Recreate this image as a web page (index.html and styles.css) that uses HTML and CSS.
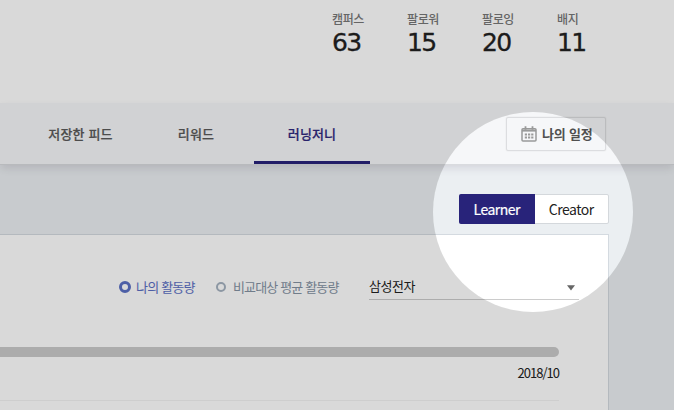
FILE: index.html
```html
<!DOCTYPE html>
<html lang="ko">
<head>
<meta charset="utf-8">
<title>러닝저니</title>
<link rel="stylesheet" href="styles.css">
</head>
<body>
<div class="page">
<header class="profile">
  <dl class="stats">
    <div><dt>캠퍼스</dt><dd>63</dd></div>
    <div><dt>팔로워</dt><dd>15</dd></div>
    <div><dt>팔로잉</dt><dd>20</dd></div>
    <div><dt>배지</dt><dd>11</dd></div>
  </dl>
</header>
<nav class="tabs">
  <a class="tab tab-feed"><span>저장한 피드</span></a>
  <a class="tab tab-reward"><span>리워드</span></a>
  <a class="tab tab-journey active"><span>러닝저니</span></a>
  <button class="schedule">
    <svg width="16" height="16" viewBox="0 0 16 16" fill="none" stroke="#999a9a">
      <rect x="1" y="2.8" width="14" height="12.2" rx="1" stroke-width="1.5"/>
      <path d="M1 4.6h14" stroke-width="2"/>
      <path d="M4.5 .3v3.5M11.5 .3v3.5" stroke-width="1.8"/>
      <path d="M3.8 8.5h8.6M3.8 11.5h8.6" stroke-width="2" stroke-dasharray="2.2 1"/>
    </svg>
    <span>나의 일정</span>
  </button>
</nav>
<main class="content">
  <div class="toggle"><button class="on"><span>Learner</span></button><button><span>Creator</span></button></div>
  <section class="card">
    <div class="filters">
      <span class="radio mine"><i></i><span>나의 활동량</span></span>
      <span class="radio compare"><i></i><span>비교대상 평균 활동량</span></span>
      <div class="select"><span>삼성전자</span><svg width="8" height="6" viewBox="0 0 8 6"><path d="M0 .3h8L4 5.6z" fill="#666"/></svg></div>
    </div>
    <div class="bar"></div>
    <div class="date"><span>2018/10</span></div>
  </section>
</main>
<div class="spotlight"></div>
</div>
</body>
</html>
```
FILE: styles.css
```css
* { box-sizing: border-box; }
body { margin: 0; }
.page {
  position: relative;
  width: 674px;
  height: 410px;
  overflow: hidden;
  background: #ebeff2;
  font-family: "Noto Sans CJK KR", sans-serif;
  color: #222;
}
button { font: inherit; padding: 0; margin: 0; }
.profile {
  height: 103px;
  padding: 10px 0 0 332px;
  background: #fff;
}
.stats { display: grid; grid-template-columns: repeat(4, 75px); margin: 0; }
.stats dt {
  font-size: 12px;
  font-weight: 500;
  line-height: 18px;
  letter-spacing: -.4px;
  color: #777;
}
.stats dd {
  margin: 0;
  font: 25px/30px "DejaVu Sans", sans-serif;
  letter-spacing: -1.7px;
  -webkit-text-stroke: .3px #222;
  color: #222;
}
.tabs {
  position: relative;
  display: flex;
  height: 62px;
  background: #f6f7f9;
  border-bottom: 1px solid #d9dbdf;
  box-shadow: 0 4px 8px -1px rgba(70, 50, 80, .14);
}
.tab {
  display: flex;
  justify-content: center;
  align-items: center;
  padding-top: 4px;
  border-bottom: 3px solid transparent;
  font-size: 13px;
  font-weight: 500;
  line-height: 20px;
  letter-spacing: .15px;
  white-space: nowrap;
  color: #5a5a5a;
  -webkit-text-stroke: .2px;
}
.tab-feed { width: 115px; margin-left: 23px; }
.tab-reward { width: 116px; }
.tab-journey { width: 116px; }
.active { color: #2f297e; border-bottom-color: #28237a; }
.schedule {
  display: flex;
  align-items: center;
  width: 100px;
  height: 34px;
  margin: 14px 0 0 136px;
  padding-left: 14px;
  border: 1px solid #dcdde0;
  border-radius: 2px;
  background: transparent;
  box-shadow: 0 0 1px #ccc;
  color: #505050;
  font-size: 13px;
  font-weight: 700;
  letter-spacing: -.2px;
}
.schedule span { margin: -1px 0 0 5px; white-space: nowrap; }
.content { padding-top: 29px; }
.toggle {
  display: flex;
  width: 150px;
  height: 30px;
  margin-left: 459px;
  border: 1px solid #d4d8dc;
  border-radius: 2px;
  background: #fff;
}
.toggle button {
  width: 74px;
  height: 28px;
  border: 0;
  background: transparent;
  color: #222;
  font-size: 14px;
  line-height: 26px;
  letter-spacing: -.5px;
}
.toggle .on {
  width: 76px;
  height: 30px;
  margin: -1px 0 0 -1px;
  border-radius: 2px 0 0 2px;
  background: #28237a;
  color: #fff;
  line-height: 28px;
  -webkit-text-stroke: .2px;
}
.card {
  width: 609px;
  height: 176px;
  margin-top: 10px;
  background: #fff;
  border: solid #d4dae0;
  border-width: 1px 1px 0 0;
}
.filters { display: flex; padding: 37px 0 0 119px; height: 64px; }
.radio {
  display: flex;
  align-items: center;
  height: 28px;
  font-size: 13px;
  white-space: nowrap;
}
.radio i { margin-top: 2px; border-radius: 50%; }
.mine { width: 97px; color: #5b6fc4; letter-spacing: -.8px; }
.mine i { width: 12px; height: 12px; margin-right: 5px; border: 3px solid #5b70c4; }
.compare { width: 153px; color: #8492a3; letter-spacing: -.85px; }
.compare i { width: 10px; height: 10px; margin-right: 7px; border: 2px solid #a5b2c0; }
.select {
  display: flex;
  justify-content: space-between;
  align-items: center;
  width: 210px;
  height: 28px;
  padding-right: 4px;
  border-bottom: 1px solid #ccc;
  font-size: 13px;
  letter-spacing: -.5px;
}
.select span { margin-top: -1px; }
.select svg { margin-top: 4px; }
.bar {
  width: 559px;
  height: 10px;
  margin-top: 48px;
  border-radius: 0 5px 5px 0;
  background: #cbcbcb;
}
.date {
  width: 559px;
  height: 44px;
  padding-top: 6px;
  border-bottom: 1px solid #f2f2f2;
  text-align: right;
  font-size: 13px;
  line-height: 20px;
  letter-spacing: -1px;
}
.spotlight {
  position: absolute;
  left: 433px;
  top: 112px;
  width: 200px;
  height: 200px;
  border-radius: 50%;
  box-shadow: 0 0 0 700px rgba(0, 0, 0, .15);
}
```
